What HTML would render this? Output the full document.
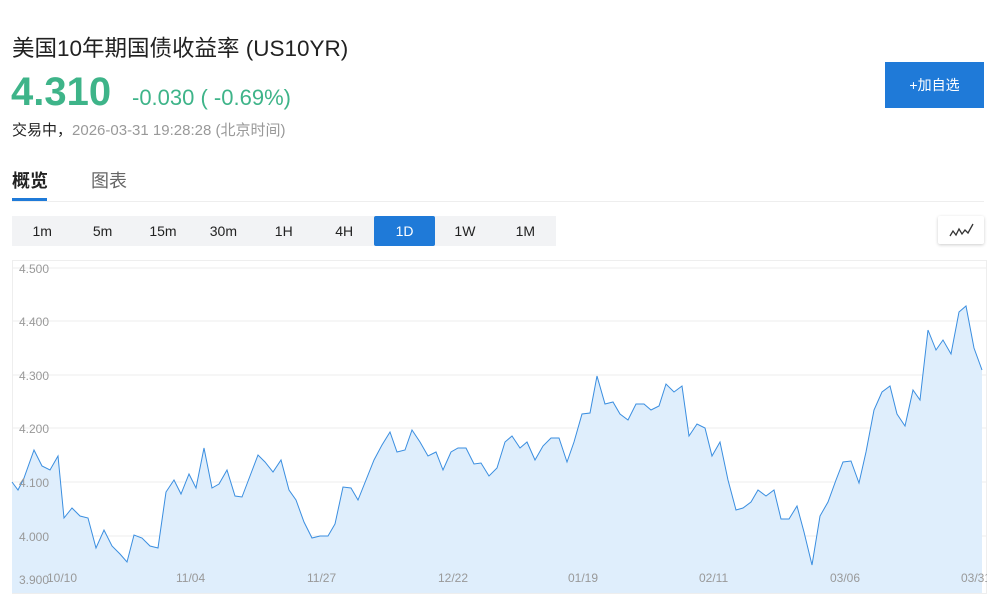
<!DOCTYPE html><html><head><meta charset="utf-8"><style>
body{margin:0;width:1001px;height:608px;background:#fff;font-family:"Liberation Sans","Noto Sans CJK SC",sans-serif;position:relative;overflow:hidden}
.a{position:absolute;white-space:nowrap}
.tb{position:absolute;top:216px;left:12px;width:544px;height:30px;background:#f2f3f5;display:flex}
.tb div{width:60.4px;text-align:center;line-height:30px;font-size:14px;color:#222}
.tb .on{background:#1f7ad8;color:#fff;border-radius:2px}
</style></head><body>
<div class="a" style="left:12px;top:31px;font-size:22.5px;color:#222">美国10年期国债收益率&nbsp;(US10YR)</div>
<div class="a" style="left:11px;top:70px;font-size:40px;font-weight:bold;color:#3eb489">4.310</div>
<div class="a" style="left:132px;top:85px;font-size:22px;color:#3eb489">-0.030 ( -0.69%)</div>
<div class="a" style="left:12px;top:119px;font-size:15px;color:#222">交易中，<span style="color:#999">2026-03-31 19:28:28&nbsp;(北京时间)</span></div>
<div class="a" style="left:885px;top:62px;width:99px;height:46px;background:#1f7ad8;color:#fff;font-size:14px;text-align:center;line-height:46px">+加自选</div>
<div class="a" style="left:12px;top:167px;font-size:18px;font-weight:bold;color:#222">概览</div>
<div class="a" style="left:91px;top:167px;font-size:18px;color:#666">图表</div>
<div class="a" style="left:12px;top:198px;width:35px;height:3px;background:#1f7ad8"></div>
<div class="a" style="left:12px;top:201px;width:972px;height:1px;background:#eee"></div>
<div class="tb"><div>1m</div><div>5m</div><div>15m</div><div>30m</div><div>1H</div><div>4H</div><div class="on">1D</div><div>1W</div><div>1M</div></div>
<div class="a" style="left:938px;top:216px;width:46px;height:28px;background:#fff;box-shadow:0 1px 3px rgba(0,0,0,.2);border-radius:2px"><svg width="46" height="28"><polyline points="12,20 15,15 18,19 21,13 24,18 27,14 30,17 35,8" fill="none" stroke="#333" stroke-width="1.3"/></svg></div>
<svg class="a" style="left:0;top:0" width="1001" height="608">
<defs><clipPath id="c"><rect x="12" y="260" width="975" height="334"/></clipPath></defs>
<rect x="12.5" y="260.5" width="974" height="333" fill="#fff" stroke="#eee"/>
<g stroke="#eee"><line x1="13" x2="986" y1="268" y2="268"/><line x1="13" x2="986" y1="321" y2="321"/><line x1="13" x2="986" y1="375" y2="375"/><line x1="13" x2="986" y1="428" y2="428"/><line x1="13" x2="986" y1="482" y2="482"/><line x1="13" x2="986" y1="536" y2="536"/></g>
<polygon fill="#dfeefc" points="12,593 12,482 18,490 24,478 34,450 42,466 50,470 58,456 64,518 72,508 80,516 88,518 96,548 104,530 112,546 120,554 127,562 134,535 142,538 150,546 158,548 166,492 174,480 181,494 189,474 196,488 204,448 212,488 219,484 227,470 235,496 242,497 250,476 258,455 265,462 273,472 281,460 289,490 296,500 304,522 312,538 320,536 328,536 335,524 343,487 351,488 358,500 366,480 374,460 382,445 390,432 397,452 405,450 412,430 420,442 428,456 436,452 443,470 451,452 458,448 466,448 474,464 481,463 489,476 497,468 505,442 512,436 520,448 527,442 535,460 543,446 551,438 559,438 567,462 574,442 582,414 590,413 597,376 605,404 613,402 620,414 628,420 636,404 644,404 651,410 659,406 666,384 674,392 682,386 689,436 697,424 705,428 712,456 720,442 728,480 736,510 743,508 751,502 758,490 766,496 774,490 781,519 789,519 797,506 804,532 812,565 820,516 828,502 836,480 843,462 851,461 859,483 866,452 874,410 882,392 890,386 897,414 905,426 913,390 920,400 928,330 936,350 943,340 951,354 959,312 966,306 974,348 982,370 982,593"/>
<polyline fill="none" stroke="#3a8ee0" stroke-width="1" points="12,482 18,490 24,478 34,450 42,466 50,470 58,456 64,518 72,508 80,516 88,518 96,548 104,530 112,546 120,554 127,562 134,535 142,538 150,546 158,548 166,492 174,480 181,494 189,474 196,488 204,448 212,488 219,484 227,470 235,496 242,497 250,476 258,455 265,462 273,472 281,460 289,490 296,500 304,522 312,538 320,536 328,536 335,524 343,487 351,488 358,500 366,480 374,460 382,445 390,432 397,452 405,450 412,430 420,442 428,456 436,452 443,470 451,452 458,448 466,448 474,464 481,463 489,476 497,468 505,442 512,436 520,448 527,442 535,460 543,446 551,438 559,438 567,462 574,442 582,414 590,413 597,376 605,404 613,402 620,414 628,420 636,404 644,404 651,410 659,406 666,384 674,392 682,386 689,436 697,424 705,428 712,456 720,442 728,480 736,510 743,508 751,502 758,490 766,496 774,490 781,519 789,519 797,506 804,532 812,565 820,516 828,502 836,480 843,462 851,461 859,483 866,452 874,410 882,392 890,386 897,414 905,426 913,390 920,400 928,330 936,350 943,340 951,354 959,312 966,306 974,348 982,370"/>
<g font-family="Liberation Sans" font-size="12" fill="#999" clip-path="url(#c)">
<text x="19" y="273">4.500</text><text x="19" y="326">4.400</text><text x="19" y="380">4.300</text><text x="19" y="433">4.200</text><text x="19" y="487">4.100</text><text x="19" y="541">4.000</text><text x="19" y="584">3.900</text>
<text x="47" y="582">10/10</text><text x="176" y="582">11/04</text><text x="307" y="582">11/27</text><text x="438" y="582">12/22</text><text x="568" y="582">01/19</text><text x="699" y="582">02/11</text><text x="830" y="582">03/06</text><text x="961" y="582">03/31</text>
</g></svg>
</body></html>
